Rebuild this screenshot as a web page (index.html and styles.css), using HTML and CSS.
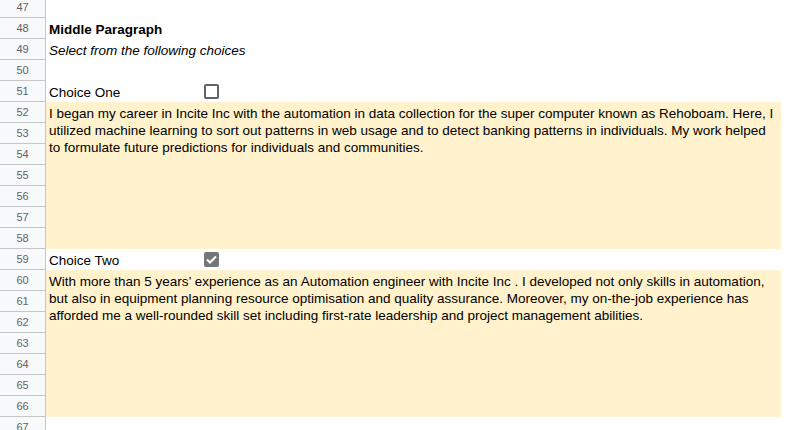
FILE: index.html
```html
<!DOCTYPE html>
<html>
<head>
<meta charset="utf-8">
<link rel="stylesheet" href="styles.css">
</head>
<body>
<div class="grid">
  <div class="heads">
    <div class="rh">47</div><div class="rh">48</div><div class="rh">49</div><div class="rh">50</div>
    <div class="rh">51</div><div class="rh">52</div><div class="rh">53</div><div class="rh">54</div>
    <div class="rh">55</div><div class="rh">56</div><div class="rh">57</div><div class="rh">58</div>
    <div class="rh">59</div><div class="rh">60</div><div class="rh">61</div><div class="rh">62</div>
    <div class="rh">63</div><div class="rh">64</div><div class="rh">65</div><div class="rh">66</div>
    <div class="rh">67</div>
  </div>
  <div class="sheet">
    <div class="row"></div>
    <div class="row bold">Middle Paragraph</div>
    <div class="row ital">Select from the following choices</div>
    <div class="row"></div>
    <div class="row choice"><span class="label">Choice One</span><span class="cb"></span></div>
    <div class="para">I began my career in Incite Inc with the automation in data collection for the super computer known as Rehoboam. Here, I utilized machine learning to sort out patterns in web usage and to detect banking patterns in individuals. My work helped to formulate future predictions for individuals and communities.</div>
    <div class="row choice"><span class="label">Choice Two</span><span class="cb checked"><svg width="11" height="9" viewBox="0 0 11 9"><path d="M1 4.5 L4 7.5 L10 1.5" fill="none" stroke="#fff" stroke-width="2"/></svg></span></div>
    <div class="para">With more than 5 years’ experience as an Automation engineer with Incite Inc . I developed not only skills in automation, but also in equipment planning resource optimisation and quality assurance. Moreover, my on-the-job experience has afforded me a well-rounded skill set including first-rate leadership and project management abilities.</div>
    <div class="row"></div>
  </div>
</div>
</body>
</html>
```
FILE: styles.css
```css
html, body { margin: 0; padding: 0; background: #fff; }
body { font-family: "Liberation Sans", Arial, sans-serif; font-size: 13.5px; color: #000; overflow: hidden; }
.grid { display: flex; margin-top: -3px; }
.heads { width: 45px; flex: none; background: #f8f9fa; border-right: 1px solid #c4c7c5; }
.rh { height: 21px; box-sizing: border-box; border-bottom: 1px solid #c4c7c5; font-size: 11px; color: #5f6368; text-align: center; line-height: 20px; font-family: "Liberation Sans", Arial, sans-serif; }
.sheet { width: 735px; flex: none; }
.row { height: 21px; box-sizing: border-box; padding: 3px 0 0 3px; line-height: 17px; white-space: nowrap; }
.bold { font-weight: bold; }
.ital { font-style: italic; }
.choice { display: flex; align-items: flex-start; }
.label { width: 155px; }
.cb { width: 15px; height: 15px; box-sizing: border-box; border: 2px solid #5f6368; border-radius: 2px; display: flex; align-items: center; justify-content: center; margin-top: 0; }
.cb.checked { background: #747775; border-color: #747775; }
.para { height: 147px; box-sizing: border-box; background: #fff2cc; padding: 3px 4px 0 3px; line-height: 17px; }
```
